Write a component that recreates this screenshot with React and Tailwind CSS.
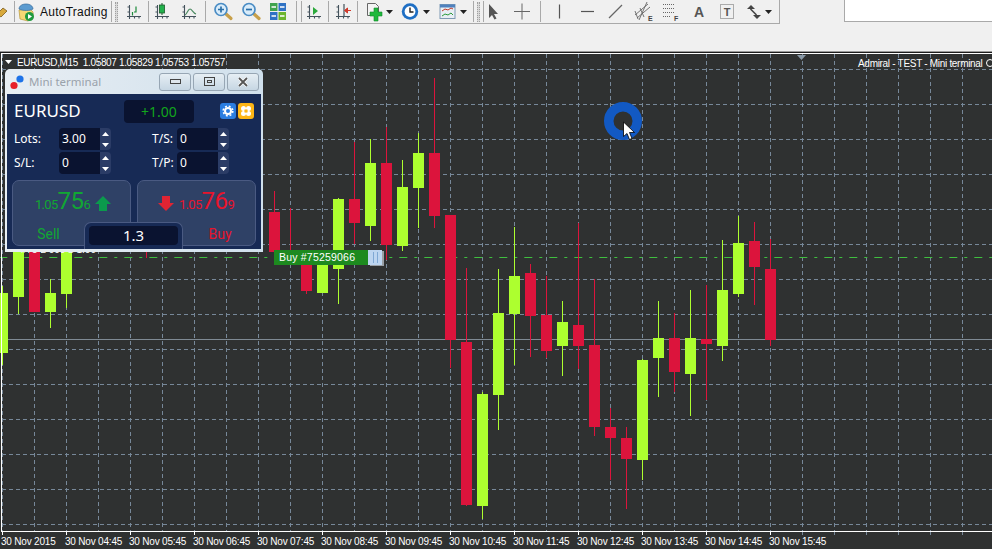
import React from 'react';

const hLines = [69, 104, 139, 174, 209, 244, 279, 314, 349, 384, 419, 454, 489, 524];
const vLines = Array.from({ length: 31 }, (_, i) => 2 + i * 32);
const ticks = [2, 66, 130, 194, 258, 322, 386, 450, 514, 578, 642, 706, 770, 802, 834, 866, 898, 930, 962];
const times = ['04:45', '05:45', '06:45', '07:45', '08:45', '09:45', '10:45', '11:45', '12:45', '13:45', '14:45', '15:45'];

// x, wick top, wick bottom, body top, body bottom, up
const candles = [
  [2, 286, 365, 293, 353, true],
  [18, 240, 314, 240, 297, true],
  [34, 240, 312, 240, 312, false],
  [50, 279, 328, 293, 312, true],
  [66, 240, 308, 240, 294, true],
  [146, 248, 258, 248, 248, false],
  [274, 191, 258, 212, 252, false],
  [290, 208, 258, 208, 208, false],
  [306, 258, 294, 258, 291, false],
  [322, 256, 293, 256, 293, true],
  [338, 198, 304, 199, 269, true],
  [354, 142, 244, 199, 223, false],
  [370, 139, 241, 163, 226, true],
  [386, 127, 260, 163, 245, false],
  [402, 160, 251, 187, 246, true],
  [418, 133, 228, 153, 188, true],
  [434, 78, 228, 153, 216, false],
  [450, 215, 368, 215, 340, false],
  [466, 268, 506, 342, 505, false],
  [482, 392, 519, 394, 506, true],
  [498, 269, 430, 313, 395, true],
  [514, 227, 365, 276, 314, true],
  [530, 264, 357, 273, 316, false],
  [546, 276, 358, 315, 351, false],
  [562, 301, 376, 322, 346, true],
  [578, 223, 369, 325, 346, false],
  [594, 279, 436, 345, 427, false],
  [610, 408, 480, 427, 438, false],
  [626, 427, 509, 438, 459, false],
  [642, 359, 480, 360, 460, true],
  [658, 301, 397, 338, 358, true],
  [674, 313, 392, 338, 372, false],
  [690, 290, 416, 338, 374, true],
  [706, 285, 400, 339, 344, false],
  [722, 240, 361, 290, 346, true],
  [738, 216, 297, 243, 294, true],
  [754, 222, 305, 241, 267, false],
  [770, 239, 346, 269, 340, false],
];

const Sep = () => <div className="w-px h-[21px] bg-[#a9a9a9] shrink-0" />;

const Grip = () => (
  <div className="w-[3px] h-[20px] ml-[3px] shrink-0 border-x border-dotted border-[#a0a0a0] bg-[#d8d8d8]" />
);

const Caret = ({ ml = 'ml-0' }) => (
  <svg width="7" height="4" viewBox="0 0 7 4" className={`shrink-0 ${ml}`}>
    <path d="M0 0h7L3.5 4z" fill="#222" />
  </svg>
);

// axes used by the chart type buttons
const Axes = () => (
  <path d="M9.500 5v14M7 16.500h14M7.500 7h2M7.500 12h2M14.500 16.500v2M19 16.500v2" stroke="#44525c" strokeWidth="1.1" fill="none" />
);

const Tool = ({ w = 'w-[28px]', ml = 'ml-0', children }) => (
  <svg viewBox="0 0 28 23" preserveAspectRatio="xMidYMid slice" className={`h-[23px] shrink-0 ${w} ${ml}`}>{children}</svg>
);

const Magnifier = ({ plus }) => (
  <g>
    <path d="M18 14l5 4.500" stroke="#c8a04a" strokeWidth="3.200" strokeLinecap="round" />
    <circle cx="13" cy="9.500" r="6" fill="#d9ecfa" stroke="#4a8cc4" strokeWidth="1.700" />
    <path d={plus ? 'M10 9.500h6M13 6.500v6' : 'M10 9.500h6'} stroke="#2a6fa8" strokeWidth="1.700" />
  </g>
);

const Toolbar = () => (
  <div className="flex items-center h-[24px] border-b border-r border-[#a9a9a9] w-[780px]">
    <svg width="14" height="23" viewBox="0 0 14 23" className="shrink-0">
      <path d="M-3 14l6-6 4 3-6 6z" fill="#d8a93c" stroke="#7a5a1c" strokeWidth="0.8" />
    </svg>
    <Sep />
    <svg width="18" height="20" viewBox="0 0 18 20" className="ml-[2px] shrink-0">
      <path d="M2 8l11-1 3 3v6l-5 3-8-2z" fill="#f4d774" stroke="#b8963a" strokeWidth="0.7" />
      <path d="M2 7c0-3 3-5 7-5s7 2 7 5c-3 2-10 2-14 0z" fill="#5b9bd0" stroke="#3c6f9c" strokeWidth="0.7" />
      <circle cx="12.500" cy="14.500" r="4.500" fill="#1f9a3e" />
      <path d="M11 12l4 2.500-4 2.500z" fill="#fff" />
    </svg>
    <span className="ml-[5px] w-[71px] shrink-0 text-[12px] tracking-[0.25px] text-[#111]">AutoTrading</span>
    <Sep />
    <Grip />
    <div className="w-[2px] shrink-0" />
    <Tool>
      <Axes />
      <path d="M12.500 15.500V12M14 12h2V6.500" stroke="#1c8a3a" strokeWidth="1.200" fill="none" />
    </Tool>
    <Sep />
    <Tool w="w-[26px]">
      <Axes />
      <path d="M14 3v12" stroke="#1a5a2a" strokeWidth="1" />
      <rect x="11.500" y="5" width="5" height="8" fill="#22b14c" stroke="#1a5a2a" strokeWidth="0.8" />
    </Tool>
    <Tool>
      <Axes />
      <path d="M10 15c2-1 3-6 5-6s3 4 6 5" stroke="#4c8a62" strokeWidth="1.200" fill="none" />
    </Tool>
    <div className="w-[2px] shrink-0" />
    <Sep />
    <div className="w-[2px] shrink-0" />
    <Tool><Magnifier plus /></Tool>
    <Tool><Magnifier /></Tool>
    <Tool>
      <rect x="6" y="3" width="7.500" height="8" fill="#3fa34d" />
      <rect x="14.500" y="3" width="7.500" height="8" fill="#2f72c4" />
      <rect x="6" y="12" width="7.500" height="8" fill="#2f72c4" />
      <rect x="14.500" y="12" width="7.500" height="8" fill="#6cb52d" />
      <path d="M7.500 7h4.500M16 7h4.500M7.500 16h4.500M16 16h4.500" stroke="#fff" strokeWidth="1.400" />
    </Tool>
    <div className="w-[4px] shrink-0" />
    <Sep />
    <div className="w-[4px] shrink-0" />
    <Sep />
    <Tool ml="-ml-[2px]">
      <Axes />
      <path d="M13 7l5 4-5 4z" fill="#2aa83a" />
    </Tool>
    <Sep />
    <Tool>
      <Axes />
      <path d="M15 4v12" stroke="#44525c" strokeWidth="1.200" />
      <path d="M22 10.500h-3M15.500 10.500l3-2.500v5z" fill="#d0392a" stroke="#d0392a" />
    </Tool>
    <Sep />
    <div className="w-[3px] shrink-0" />
    <Tool>
      <path d="M6.500 3.500h8l3 3v9h-11z" fill="#f4f4f4" stroke="#666" strokeWidth="1" />
      <path d="M13 8h4v4h4v4h-4v5h-4v-5H9v-4h4z" fill="#1fb83c" stroke="#128a2a" strokeWidth="0.6" />
    </Tool>
    <Caret ml="-ml-[3px]" />
    <div className="w-[3px] shrink-0" />
    <Tool>
      <circle cx="14" cy="11.500" r="8.200" fill="#1f6fc4" />
      <circle cx="14" cy="11.500" r="5.400" fill="#fff" />
      <path d="M14 7.500v4.500h3.500" stroke="#222" strokeWidth="1.400" fill="none" />
    </Tool>
    <Caret ml="-ml-[1px]" />
    <div className="w-[4px] shrink-0" />
    <Tool>
      <rect x="6" y="4.500" width="15" height="14" fill="#e8eef4" stroke="#7f9ab4" />
      <rect x="6" y="4.500" width="15" height="3" fill="#4f81bd" />
      <path d="M8 11l3-2 3 1 3-2 2 1" stroke="#c0392b" strokeWidth="1" fill="none" />
      <path d="M8 16l3-2 3 1 3-2 2 2" stroke="#2a9a3a" strokeWidth="1" fill="none" />
    </Tool>
    <Caret ml="-ml-[2px]" />
    <div className="w-[6px] shrink-0" />
    <Sep />
    <Grip />
    <div className="w-[3px] shrink-0" />
    <Sep />
    <Tool w="w-[24px]">
      <path d="M7 4v14l3-3 2.500 4.500 2-1L12 14h4z" fill="#555" />
    </Tool>
    <Tool>
      <path d="M14 3.500v16M6 11.500h16" stroke="#666" strokeWidth="1" />
    </Tool>
    <div className="w-[4px] shrink-0" />
    <Sep />
    <div className="w-[4px] shrink-0" />
    <Tool><path d="M14.500 4.500v14" stroke="#555" strokeWidth="1.200" /></Tool>
    <Tool><path d="M8 11.500h13" stroke="#555" strokeWidth="1.200" /></Tool>
    <Tool><path d="M8 18L21 5" stroke="#666" strokeWidth="1.200" /></Tool>
    <Tool>
      <path d="M6 15l13-11M8 18l13-11M10 20l8-18M6 11l3 8M11 8l4 9" stroke="#666" strokeWidth="0.9" />
      <text x="19" y="21" fontSize="7" fontWeight="700" fill="#444" fontFamily="'Liberation Sans', sans-serif">E</text>
    </Tool>
    <Tool>
      <path d="M6 4.500h11M6 8.500h11M6 12.500h11M6 16.500h8" stroke="#666" strokeWidth="1" strokeDasharray="1 1" />
      <text x="17" y="21" fontSize="7" fontWeight="700" fill="#444" fontFamily="'Liberation Sans', sans-serif">F</text>
    </Tool>
    <Tool>
      <text x="14" y="17" textAnchor="middle" fontSize="14" fontWeight="700" fill="#555" fontFamily="'Liberation Sans', sans-serif">A</text>
    </Tool>
    <Tool>
      <rect x="7.500" y="4.500" width="13" height="14" fill="none" stroke="#666" strokeDasharray="1 1" />
      <text x="14" y="16" textAnchor="middle" fontSize="11" fontWeight="700" fill="#555" fontFamily="'Liberation Sans', sans-serif">T</text>
    </Tool>
    <Tool w="w-[24px]">
      <path d="M8 9l4-4 4 4zM14 15h8l-4 4z" fill="#444" />
      <path d="M11.500 9l6 6" stroke="#444" strokeWidth="1.600" />
    </Tool>
    <Caret />
  </div>
);

const Spinner = () => (
  <div className="w-[11px] h-full flex flex-col bg-[#2b3c66] rounded-r-[4px]">
    <div className="flex-1 flex items-center justify-center">
      <svg width="7" height="4" viewBox="0 0 7 4"><path d="M3.500 0L7 4H0z" fill="#fff" /></svg>
    </div>
    <div className="flex-1 flex items-center justify-center">
      <svg width="7" height="4" viewBox="0 0 7 4"><path d="M0 0h7L3.500 4z" fill="#fff" /></svg>
    </div>
  </div>
);

const Field = ({ value }) => (
  <div className="flex h-full">
    <div className="w-[41px] h-full pl-[3px] flex items-center rounded-l-[4px] bg-[#0a1330] text-[12px] text-white">{value}</div>
    <Spinner />
  </div>
);

const CaptionBtn = ({ children }) => (
  <div className="w-[32px] h-[18px] flex items-center justify-center rounded-[3px] border border-[#97a6b4] bg-gradient-to-b from-[#e6eef4] to-[#c6d6e3]">
    {children}
  </div>
);

const MiniTerminal = () => (
  <div className="absolute left-[5px] top-[18px] w-[258px] h-[183px] flex flex-col rounded-t-[5px] bg-gradient-to-r from-[#e8eef3] to-[#d0e0ec] font-['Noto_Sans',sans-serif]">
    <div className="h-[25px] flex items-center shrink-0">
      <svg width="14" height="16" viewBox="0 0 14 16" className="ml-[5px] shrink-0">
        <circle cx="10" cy="5" r="3.600" fill="#1e73e8" />
        <circle cx="4" cy="11.500" r="3.600" fill="#e8202a" />
      </svg>
      <span className="ml-[5px] w-[130px] shrink-0 text-[11.500px] text-[#9aa2ab]">Mini terminal</span>
      <div className="flex gap-[2px]">
        <CaptionBtn><div className="w-[11px] h-[5px] border border-[#444] bg-[#dfe6ec]" /></CaptionBtn>
        <CaptionBtn><div className="w-[11px] h-[9px] border border-[#444] flex items-center justify-center"><div className="w-[5px] h-[3px] border border-[#444]" /></div></CaptionBtn>
        <CaptionBtn>
          <svg width="12" height="10" viewBox="0 0 12 10">
            <path d="M2 1l8 8M10 1L2 9" stroke="#fff" strokeWidth="3.200" />
            <path d="M2 1l8 8M10 1L2 9" stroke="#555" strokeWidth="1.800" />
          </svg>
        </CaptionBtn>
      </div>
    </div>
    <div className="flex-1 mx-[2px] mb-[3px] bg-[#172a55] text-white">
      <div className="flex items-center pt-[6px] h-[29px]">
        <span className="pl-[7px] w-[117px] -mt-[3px] text-[17px] leading-none">EURUSD</span>
        <div className="w-[70px] h-[23px] flex items-center justify-center rounded-[4px] bg-[#0a1330] text-[14px] text-[#12a51c]">+1.00</div>
        <div className="ml-[26px] w-[16px] h-[16px] -mt-[2px] flex items-center justify-center rounded-[3px] bg-[#2a7de1]">
          <svg width="12" height="12" viewBox="0 0 12 12">
            <circle cx="6" cy="6" r="3" fill="none" stroke="#fff" strokeWidth="2" />
            <circle cx="6" cy="6" r="4.800" fill="none" stroke="#fff" strokeWidth="1.600" strokeDasharray="1.900 1.900" />
          </svg>
        </div>
        <div className="ml-[2px] w-[16px] h-[16px] -mt-[2px] flex items-center justify-center rounded-[3px] bg-[#fdb515]">
          <svg width="12" height="12" viewBox="0 0 12 12">
            <circle cx="3.500" cy="3.500" r="2.500" fill="#fff" />
            <circle cx="8.500" cy="3.500" r="2.500" fill="#fff" />
            <circle cx="3.500" cy="8.500" r="2.500" fill="#fff" />
            <circle cx="8.500" cy="8.500" r="2.500" fill="#fff" />
            <rect x="4.500" y="4.500" width="3" height="3" fill="#fdb515" />
          </svg>
        </div>
      </div>
      <div className="flex items-center h-[22px] mt-[5px] text-[12px]">
        <span className="pl-[7px] w-[52px]">Lots:</span>
        <Field value="3.00" />
        <span className="ml-[41px] w-[25px]">T/S:</span>
        <Field value="0" />
      </div>
      <div className="flex items-center h-[22px] mt-[2px] text-[12px]">
        <span className="pl-[7px] w-[52px]">S/L:</span>
        <Field value="0" />
        <span className="ml-[41px] w-[25px]">T/P:</span>
        <Field value="0" />
      </div>
      <div className="relative h-[66px] mt-[6px] mx-[5px] flex gap-[6px] font-['Roboto',sans-serif]">
        <div className="w-[119px] h-full flex flex-col rounded-[7px] border border-[#4a5a82] bg-[#2f4166]">
          <div className="h-[41px] flex items-center pl-[22px] text-[#11a733]">
            <span className="flex items-baseline">
              <span className="text-[13px] tracking-[-0.7px]">1.05</span>
              <span className="text-[24px] leading-none tracking-[-0.5px]">75</span>
              <span className="text-[13px]">6</span>
            </span>
            <svg width="16" height="15" viewBox="0 0 16 15" className="ml-[4px] mt-[4px]"><path d="M8 0l8 8h-4v7H4V8H0z" fill="#0b9a4c" /></svg>
          </div>
          <div className="w-[71px] mt-[2px] text-center text-[14px] text-[#11a733]">Sell</div>
        </div>
        <div className="w-[119px] h-full flex flex-col rounded-[7px] border border-[#4a5a82] bg-[#2f4166]">
          <div className="h-[41px] flex items-center pl-[20px] text-[#e8142c]">
            <svg width="16" height="15" viewBox="0 0 16 15" className="mr-[5px] mt-[4px]"><path d="M4 0h8v7h4l-8 8-8-8h4z" fill="#e02433" /></svg>
            <span className="flex items-baseline">
              <span className="text-[13px] tracking-[-0.7px]">1.05</span>
              <span className="text-[24px] leading-none tracking-[-0.5px]">76</span>
              <span className="text-[13px]">9</span>
            </span>
          </div>
          <div className="ml-[46px] w-[72px] mt-[2px] text-center text-[14px] text-[#e8142c]">Buy</div>
        </div>
        <div className="absolute left-[72px] top-[42px] w-[99px] h-[27px] pt-[3px] px-[4px] rounded-t-[7px] border border-b-0 border-[#4a5a82] bg-[#172a55]">
          <div className="h-[19px] flex items-center justify-center rounded-[4px] bg-[#0a1330] text-[15px] text-white font-['Noto_Sans',sans-serif]">1.3</div>
        </div>
      </div>
    </div>
  </div>
);

const ChartSvg = () => (
  <svg viewBox="0 51 992 480" className="absolute inset-0 w-[992px] h-[480px] overflow-visible">
    {/* grid */}
    {hLines.map((y) => (
      <line key={y} x1="2" x2="992" y1={y + 0.5} y2={y + 0.5} stroke="#778899" strokeDasharray="4 3" />
    ))}
    {vLines.map((x) => (
      <line key={x} x1={x + 0.5} x2={x + 0.5} y1="54" y2="531" stroke="#778899" strokeDasharray="4 3" />
    ))}
    <line x1="2" x2="992" y1="339.500" y2="339.500" stroke="#7f8a94" />
    <line x1="-0.700" x2="992" y1="257.500" y2="257.500" stroke="#3fbf3f" strokeDasharray="8 7 3 7" />

    {/* candles */}
    {candles.map(([x, wt, wb, bt, bb, up]) => (
      <g key={x} className={up ? 'fill-[#adff2f]' : 'fill-[#dc143c]'}>
        <rect x={x} y={wt} width="1" height={wb - wt} />
        <rect x={x - 5} y={bt} width="11" height={bb - bt} />
      </g>
    ))}

    {/* axes */}
    <rect x="1" y="53" width="1" height="478" fill="#fff" />
    <rect x="1" y="53" width="991" height="1" fill="#fff" />
    <rect x="1" y="531" width="991" height="1" fill="#fff" />
    {ticks.map((x) => (
      <rect key={x} x={x} y="532" width="1" height="3" fill={x > 770 ? '#778899' : '#fff'} />
    ))}
    <path d="M797 55h9l-4.500 5z" fill="#8a9aa8" />
    <path d="M5 60h7l-3.500 4z" fill="#fff" />
    <circle cx="990" cy="63" r="3.500" fill="none" stroke="#fff" />

    {/* click marker */}
    <circle cx="623" cy="121" r="14.250" fill="none" stroke="#1259c3" strokeWidth="9.500" />
    <path d="M623.500 122v14.500l3.500-3 2.500 6 2.500-1-2.500-6h5z" fill="#fff" stroke="#000" strokeWidth="0.8" />
  </svg>
);

const App = () => (
  <div className="w-[992px] h-[549px] overflow-hidden flex flex-col bg-[#f0f0f0] font-['Liberation_Sans',sans-serif]">
    <div className="relative h-[24px] shrink-0">
      <Toolbar />
      <div className="absolute left-[844px] top-0 w-[148px] h-[22px] bg-white border-l border-b border-[#a9a9a9]" />
    </div>
    <div className="h-[27px] shrink-0" />
    <div className="flex-1 flex flex-col bg-[#2f3131] text-white text-[10px] border-t border-[#9a9a9a]">
      <div className="relative h-[479px] shrink-0 border-t border-[#1c1c1c]">
        <div className="absolute -top-[2px] left-0 w-[992px] h-[480px]">
          <ChartSvg />
          <div className="absolute left-[17px] top-[5px] whitespace-nowrap leading-[13px] tracking-[-0.35px]">EURUSD,M15&nbsp; 1.05807 1.05829 1.05753 1.05757</div>
          <div className="absolute left-[858px] top-[6px] whitespace-nowrap leading-[13px] tracking-[-0.3px]">Admiral - TEST - Mini terminal</div>
          <div className="absolute left-[8px] top-[193px] w-[88px] text-right whitespace-nowrap leading-[12px]">#75 2 000 b 1.00</div>
          <MiniTerminal />
          <div className="absolute left-[274px] top-[199px] flex items-start">
            <div className="w-[94px] h-[15px] pl-[5px] flex items-center bg-[#1d8a1f] text-[10.500px] tracking-[0.2px]">Buy #75259066</div>
            <div className="w-[14px] h-[15px] flex items-center justify-center bg-[#bcd5f0] shadow-[2px_1px_0_#9aa0a6]">
              <div className="w-[5px] h-[11px] border-x border-[#7fa8d4]" />
            </div>
          </div>
        </div>
      </div>
      <div className="flex items-center h-[18px] pt-[3px] whitespace-nowrap tracking-[-0.2px]">
        <span className="w-[65px] pl-[1px] shrink-0">30 Nov 2015</span>
        {times.map((t) => (
          <span key={t} className="w-[64px] shrink-0">30 Nov {t}</span>
        ))}
      </div>
    </div>
  </div>
);

export default App;
